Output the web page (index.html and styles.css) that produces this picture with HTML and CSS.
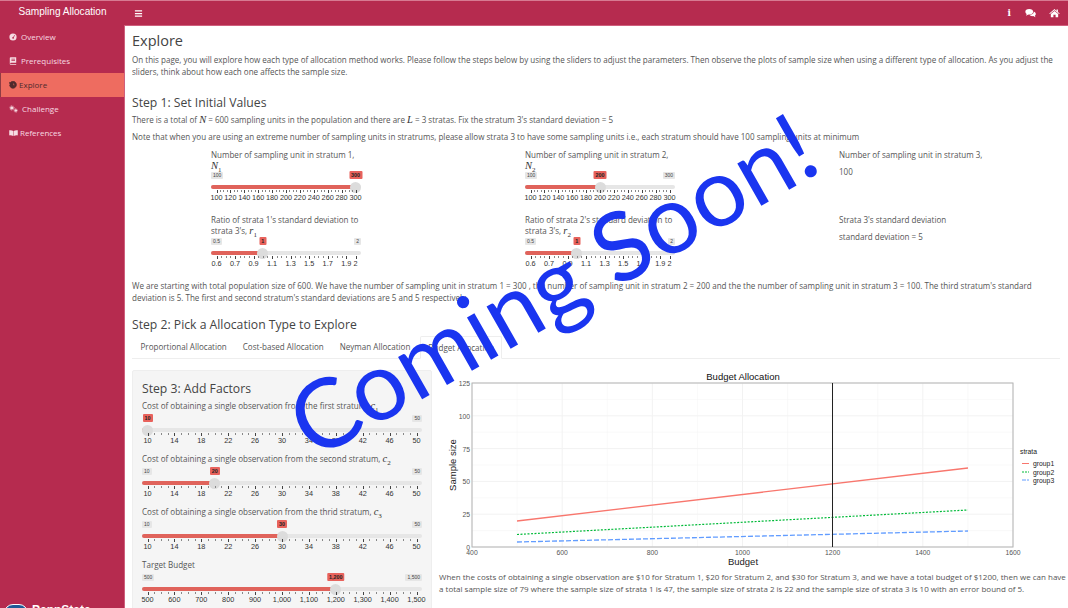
FILE: index.html
```html
<!DOCTYPE html>
<html lang="en">
<head>
    <meta charset="UTF-8">
    <title>Sampling Allocation</title>
    <link rel="stylesheet" href="styles.css">
</head>
<body>

    <header class="topbar">
        <div class="brand">Sampling Allocation</div>
        <div class="topbar-main">
            <svg class="icon burger" viewBox="0 0 10 10"><path d="M1 1.500h8v1.300H1zM1 4.400h8v1.300H1zM1 7.300h8v1.300H1z"/></svg>
            <div class="topbar-right">
                <span class="info">i</span>
                <svg class="icon" viewBox="0 0 12 10"><ellipse cx="4.600" cy="3.600" rx="4.200" ry="3"/><path d="M2 5.500L1.200 8 4.500 6z"/><path d="M9.500 3.400c1.400.5 2.300 1.500 2.300 2.700 0 .8-.4 1.400-1 1.900l.6 1.600-2.400-1.200c-1.600.3-3.400-.2-4.200-1.400 2.600.1 5-1.300 4.700-3.600z"/></svg>
                <svg class="icon" viewBox="0 0 12 10"><path d="M6 .5L.3 5.500l.7.7L6 1.900l5 4.300.7-.7-2-1.700V1.200H8.200v1.500z"/><path d="M2 6.200L6 2.800l4 3.400V9.500H7.200V7H4.800v2.500H2z"/></svg>
            </div>
        </div>
    </header>

    <div class="layout">
        <nav class="sidebar">
            <a class="nav-item">
                <svg class="icon" viewBox="0 0 10 10"><path fill-rule="evenodd" d="M5 .5a4.500 4.500 0 1 1 0 9 4.500 4.500 0 0 1 0-9zM6.800 2.600L5.300 5a1.100 1.100 0 1 0 .7.400L7.500 3z"/></svg>
                Overview
            </a>
            <a class="nav-item">
                <svg class="icon" viewBox="0 0 10 10"><path fill-rule="evenodd" d="M1 1.500C1 .7 1.600.3 2.300.3H9v7H2.300c-.5 0-.8.3-.8.7s.3.7.8.7H9v1H2.300C1.500 9.700 1 9.100 1 8.300zM3 2.200v.8h4.500v-.8zM3 3.800v.8h4.500v-.8z"/></svg>
                Prerequisites
            </a>
            <a class="nav-item active">
                <svg class="icon" viewBox="0 0 10 10" fill="none" stroke="currentColor" stroke-width=".8"><path d="M1.300 2.500A4.300 4.300 0 1 1 .7 5M5 2.600V5.300H7.200"/><path d="M.8 1.200v2h2"/></svg>
                Explore
            </a>
            <a class="nav-item">
                <svg class="icon wide" viewBox="0 0 12 10"><circle cx="3.800" cy="3.500" r="2.300"/><circle cx="3.800" cy="3.500" r="3" fill="none" stroke="currentColor" stroke-width=".9" stroke-dasharray="1 1"/><circle cx="9" cy="7" r="1.800"/><circle cx="9" cy="7" r="2.400" fill="none" stroke="currentColor" stroke-width=".8" stroke-dasharray="1 .9"/></svg>
                Challenge
            </a>
            <a class="nav-item tight">
                <svg class="icon wide" viewBox="0 0 12 10"><path d="M.3 1.300C2.200 1 4.300 1.200 5.700 2.200V9C4.300 8.200 2.200 8 .3 8.200zM11.700 1.300C9.800 1 7.700 1.200 6.300 2.200V9c1.400-.8 3.500-1 5.400-.8z"/></svg>
                References
            </a>
            <div class="footer-logo">
                <span class="shield"></span>
                <span class="footer-name">PennState</span>
            </div>
        </nav>

        <main class="content">
            <h1>Explore</h1>
            <p>On this page, you will explore how each type of allocation method works. Please follow the steps below by using the sliders to adjust the parameters. Then observe the plots of sample size when using a different type of allocation. As you adjust the sliders, think about how each one affects the sample size.</p>

            <h2 class="step1">Step 1: Set Initial Values</h2>
            <p>There is a total of <i class="math">N</i> = 600 sampling units in the population and there are <i class="math">L</i> = 3 stratas. Fix the stratum 3's standard deviation = 5</p>
            <p class="note">Note that when you are using an extreme number of sampling units in stratrums, please allow strata 3 to have some sampling units i.e., each stratum should have 100 sampling units at minimum</p>

            <div class="initial-grid">
                <div class="field">
                    <label>Number of sampling unit in stratum 1,<br><i class="math">N<sub>1</sub></i></label>
                    <div class="slider small" data-slider="n1"></div>
                </div>
                <div class="field">
                    <label>Number of sampling unit in stratum 2,<br><i class="math">N<sub>2</sub></i></label>
                    <div class="slider small" data-slider="n2"></div>
                </div>
                <div class="field">
                    <label class="plain">Number of sampling unit in stratum 3,</label>
                    <div class="static-value">100</div>
                </div>
                <div class="field lower">
                    <label>Ratio of strata 1's standard deviation to<br>strata 3's, <i class="math">r<sub>1</sub></i></label>
                    <div class="slider small" data-slider="r1"></div>
                </div>
                <div class="field lower">
                    <label>Ratio of strata 2's standard deviation to<br>strata 3's, <i class="math">r<sub>2</sub></i></label>
                    <div class="slider small" data-slider="r2"></div>
                </div>
                <div class="field lower">
                    <label class="plain">Strata 3's standard deviation</label>
                    <div class="static-value">standard deviation = 5</div>
                </div>
            </div>

            <p class="summary">We are starting with total population size of 600. We have the number of sampling unit in stratum 1 = 300 , the number of sampling unit in stratum 2 = 200 and the the number of sampling unit in stratum 3 = 100. The third stratum's standard deviation is 5. The first and second stratum's standard deviations are 5 and 5 respectively.</p>

            <h2 class="step2">Step 2: Pick a Allocation Type to Explore</h2>
            <ul class="tabs">
                <li>Proportional Allocation</li>
                <li>Cost-based Allocation</li>
                <li>Neyman Allocation</li>
                <li class="active">Budget Allocation</li>
            </ul>

            <div class="tab-body">
                <section class="well">
                    <h3>Step 3: Add Factors</h3>
                    <label>Cost of obtaining a single observation from the first stratum, <i class="math">c<sub>1</sub></i></label>
                    <div class="slider" data-slider="c1"></div>
                    <label>Cost of obtaining a single observation from the second stratum, <i class="math">c<sub>2</sub></i></label>
                    <div class="slider" data-slider="c2"></div>
                    <label>Cost of obtaining a single observation from the thrid stratum, <i class="math">c<sub>3</sub></i></label>
                    <div class="slider" data-slider="c3"></div>
                    <label>Target Budget</label>
                    <div class="slider" data-slider="budget"></div>
                </section>

                <section class="plot-col">
                    <svg class="plot" width="629" height="202" viewBox="439 368 629 202">
                        <text class="plot-title" x="743" y="381" text-anchor="middle">Budget Allocation</text>
                        <g id="grid"></g>
                        <rect x="472" y="384" width="541" height="164" fill="none" stroke="#b3b3b3"/>
                        <polyline points="517,522 968,469" fill="none" stroke="#f8766d" stroke-width="1.300"/>
                        <polyline points="517,535.500 968,511" fill="none" stroke="#00ba38" stroke-width="1.200" stroke-dasharray="2 1.500"/>
                        <polyline points="517,543 968,532" fill="none" stroke="#619cff" stroke-width="1.300" stroke-dasharray="5 2"/>
                        <line x1="832.500" y1="384" x2="832.500" y2="548" stroke="#222"/>
                        <g id="ticks" class="plot-tick"></g>
                        <text class="plot-axis" x="743" y="566" text-anchor="middle">Budget</text>
                        <text class="plot-axis" x="0" y="0" text-anchor="middle" transform="translate(456 466) rotate(-90)">Sample size</text>
                        <text class="plot-tick dark" x="1020" y="455">strata</text>
                        <line x1="1022" y1="464.500" x2="1029" y2="464.500" stroke="#f8766d"/>
                        <line x1="1022" y1="473" x2="1029" y2="473" stroke="#00ba38" stroke-dasharray="2 1"/>
                        <line x1="1022" y1="481" x2="1029" y2="481" stroke="#619cff" stroke-dasharray="4 1"/>
                        <text class="plot-tick dark" x="1033" y="467">group1</text>
                        <text class="plot-tick dark" x="1033" y="475.500">group2</text>
                        <text class="plot-tick dark" x="1033" y="484">group3</text>
                    </svg>
                    <p class="plot-note">When the costs of obtaining a single observation are $10 for Stratum 1, $20 for Stratum 2, and $30 for Stratum 3, and we have a total budget of $1200, then we can have a total sample size of 79 where the sample size of strata 1 is 47, the sample size of strata 2 is 22 and the sample size of strata 3 is 10 with an error bound of 5.</p>
                </section>
            </div>
        </main>
    </div>

    <div class="coming-soon">Coming Soon!</div>

    <script>
        // every slider: range, current value, label texts and the minor ticks between labels
        var range = function (from, to, step) {
            var out = [];
            for (var v = from; v <= to; v += step) out.push(v);
            return out;
        };
        var ratioLabels = ['0.6', '0.7', '0.9', '1.1', '1.3', '1.5', '1.7', '1.9', '2'];
        var ratioAt = [0.5, 0.7, 0.9, 1.1, 1.3, 1.5, 1.7, 1.9, 2];
        var costs = range(10, 50, 4);
        var budget = range(500, 1500, 100);

        var sliders = {
            n1: { min: 100, max: 300, value: 300, at: range(100, 300, 20), hideMax: true },
            n2: { min: 100, max: 300, value: 200, at: range(100, 300, 20) },
            r1: { min: 0.5, max: 2, value: 1, at: ratioAt, labels: ratioLabels },
            r2: { min: 0.5, max: 2, value: 1, at: ratioAt, labels: ratioLabels },
            c1: { min: 10, max: 50, value: 10, at: costs, hideMin: true },
            c2: { min: 10, max: 50, value: 20, at: costs },
            c3: { min: 10, max: 50, value: 30, at: costs },
            budget: { min: 500, max: 1500, value: 1200, at: budget }
        };

        function money(v) {
            return v >= 1000 ? Math.floor(v / 1000) + ',' + String(v % 1000).padStart(3, '0') : String(v);
        }

        function pct(s, v) {
            return (v - s.min) / (s.max - s.min) * 100;
        }

        document.querySelectorAll('[data-slider]').forEach(function (el) {
            var s = sliders[el.dataset.slider];
            var fmt = s.max >= 1000 ? money : String;
            var p = pct(s, s.value);
            var html = '<div class="tags">';
            if (!s.hideMin) html += '<span class="tag-min">' + fmt(s.min) + '</span>';
            if (!s.hideMax) html += '<span class="tag-max">' + fmt(s.max) + '</span>';
            html += '</div><div class="rail"><div class="scale">';
            html += '<span class="tag-value" style="left:' + p + '%">' + fmt(s.value) + '</span>';
            html += '<span class="fill" style="width:calc(' + p + '% + 5.5px)"></span>';
            html += '<span class="handle" style="left:' + p + '%"></span></div></div>';
            html += '<div class="scale ticks">';
            s.at.forEach(function (v, i) {
                var left = pct(s, v);
                html += '<span class="major" style="left:' + left + '%"></span>';
                html += '<span class="tick-label" style="left:' + left + '%">' + (s.labels ? s.labels[i] : fmt(v)) + '</span>';
                var next = s.at[i + 1];
                if (next !== undefined && next - v > (s.max - s.min) / 12) {
                    for (var k = 1; k < 4; k++) {
                        html += '<span class="minor" style="left:' + pct(s, v + (next - v) * k / 4) + '%"></span>';
                    }
                }
            });
            html += '</div>';
            el.innerHTML = html;
        });

        // plot grid and axis labels
        var grid = '', ticks = '';
        var xAt = function (v) { return 472 + (v - 400) * 541 / 1200; };
        var yAt = function (v) { return 548 - v * 164 / 125; };
        for (var x = 400; x <= 1600; x += 100) {
            grid += '<line x1="' + xAt(x) + '" x2="' + xAt(x) + '" y1="384" y2="548" stroke="#f2f2f2" stroke-width="' + (x % 200 ? .5 : 1) + '"/>';
            if (x % 200 === 0) ticks += '<text x="' + xAt(x) + '" y="556" text-anchor="middle">' + x + '</text>';
        }
        for (var y = 0; y <= 125; y += 12.5) {
            grid += '<line x1="472" x2="1013" y1="' + yAt(y) + '" y2="' + yAt(y) + '" stroke="#f2f2f2" stroke-width="' + (y % 25 ? .5 : 1) + '"/>';
            if (y % 25 === 0) ticks += '<text x="470" y="' + (yAt(y) + 3) + '" text-anchor="end">' + y + '</text>';
        }
        document.getElementById('grid').innerHTML = grid;
        document.getElementById('ticks').innerHTML = ticks;
    </script>

</body>
</html>
```

FILE: styles.css
```css
html, body {
    height: 608px;
    margin: 0;
    overflow: hidden;
}
body {
    position: relative;
    font-family: "Open Sans", sans-serif;
    font-size: 8.05px;
    line-height: 12px;
    color: #555;
    background: #fff;
}
h1, h2, h3, p, ul, label {
    margin: 0;
    padding: 0;
    font-weight: normal;
}
.icon {
    width: 8px;
    height: 8px;
    fill: currentColor;
    flex: none;
}
.icon.wide {
    width: 9px;
}

/* top bar */
.topbar {
    display: flex;
    height: 24px;
    margin-top: 1px;
    color: #fff;
    background: #b62b4f;
    box-shadow: 0 1px 0 #cf5f7d, 0 -1px 0 #d77a92;
}
.brand {
    width: 125px;
    font-family: "Liberation Sans", sans-serif;
    font-size: 10.1px;
    line-height: 22px;
    text-align: center;
}
.topbar-main {
    flex: 1;
    display: flex;
    align-items: center;
    justify-content: space-between;
    padding: 0 8px 0 9px;
}
.burger {
    width: 9px;
    height: 9px;
}
.topbar-right {
    display: flex;
    align-items: center;
    gap: 13px;
}
.topbar-right .icon {
    width: 11px;
    height: 10px;
}
.info {
    font-family: "DejaVu Serif", serif;
    font-size: 9px;
    font-weight: bold;
    margin-right: 1px;
}

/* layout */
.layout {
    display: flex;
    height: 583px;
}
.sidebar {
    width: 124px;
    flex: none;
    color: #f6dbe2;
    background: #b62b4f;
    border-right: 1px solid #cf5f7d;
    overflow: hidden;
}
.nav-item {
    display: flex;
    align-items: center;
    gap: 4px;
    height: 24px;
    padding-left: 9px;
    font-size: 8px;
}
.nav-item.tight {
    gap: 2px;
}
.nav-item.active {
    gap: 2px;
    padding-left: 8px;
    color: #4f2b2d;
    background: #ee6c60;
    border-left: 1px solid #8e3c44;
}
.footer-logo {
    display: flex;
    gap: 4px;
    margin: 459px 0 0 4px;
}
.shield {
    width: 22px;
    height: 24px;
    background: #1e5a96;
    border: 1px solid #fff;
    border-radius: 9px 9px 0 0;
}
.footer-name {
    color: #fff;
    font-family: "Liberation Sans", sans-serif;
    font-size: 12px;
    font-weight: bold;
}

/* main column */
.content {
    flex: 1;
    min-width: 0;
    padding: 7px 8px 0 7px;
}
h1 {
    font-size: 14.5px;
    line-height: 18px;
    color: #444;
    margin-bottom: 4px;
}
h2 {
    font-size: 12.2px;
    line-height: 16px;
    color: #444;
}
.step1 {
    margin: 17px 0 3px;
}
.note {
    margin-top: 5px;
}
.math {
    font-family: "Liberation Serif", serif;
    font-size: 10.5px;
    line-height: 0;
    color: #333;
}
.math sub {
    font-size: 7px;
    font-style: normal;
    line-height: 0;
}

/* step 1 sliders */
.initial-grid {
    display: grid;
    grid-template-columns: repeat(3, 314px);
    grid-template-rows: 65px auto;
    margin: 6px 0 0 79px;
}
.field label {
    display: block;
    width: 160px;
    height: 20px;
    line-height: 11px;
}
.field.lower label {
    height: 21px;
}
.field label.plain,
.field.lower label.plain {
    width: auto;
    height: 12px;
    line-height: 12px;
}
.static-value {
    margin-top: 5px;
}

/* range sliders */
.slider {
    position: relative;
    width: 280px;
    height: 37px;
    margin-bottom: 4px;
}
.slider.small {
    width: 150px;
}
.tags {
    position: relative;
    display: flex;
    justify-content: space-between;
    height: 7px;
    padding-top: 3px;
}
.tags span {
    height: 7px;
    padding: 0 2px;
    font-family: "Liberation Sans", sans-serif;
    font-size: 5px;
    line-height: 7px;
    color: #444;
    background: #e6e6e6;
    border-radius: 1px;
}
.tag-max {
    margin-left: auto;
}
.rail {
    position: relative;
    height: 4px;
    margin-top: 6px;
    background: #e6e6e6;
    border-radius: 2px;
}
.scale {
    position: absolute;
    left: 5.5px;
    right: 5.5px;
    top: 0;
    bottom: 0;
}
.ticks {
    top: 21px;
    height: 16px;
    bottom: auto;
}
.fill {
    position: absolute;
    left: -5.5px;
    top: 0;
    height: 4px;
    background: #e0635b;
    border-radius: 2px 0 0 2px;
}
.handle {
    position: absolute;
    top: -3.5px;
    width: 11px;
    height: 11px;
    margin-left: -5.5px;
    background: #dcdcdc;
    border-radius: 50%;
}
.tag-value {
    position: absolute;
    top: -14px;
    height: 8px;
    padding: 0 2px;
    transform: translateX(-50%);
    font-family: "Liberation Sans", sans-serif;
    font-size: 5.4px;
    font-weight: bold;
    line-height: 8px;
    color: #222;
    background: #e8625c;
    border-radius: 1px;
}
.major, .minor {
    position: absolute;
    top: 0;
    width: 1px;
    background: #444;
}
.major {
    height: 3px;
}
.minor {
    height: 2px;
    background: #888;
}
.tick-label {
    position: absolute;
    top: 3px;
    transform: translateX(-50%);
    font-family: "Liberation Sans", sans-serif;
    font-size: 7.3px;
    line-height: 10px;
    color: #333;
}

.summary {
    margin-top: 4px;
}

/* step 2 tabs */
.step2 {
    margin: 13px 0 3px;
}
.tabs {
    display: flex;
    height: 22px;
    list-style: none;
    border-bottom: 1px solid #eee;
}
.tabs li {
    padding: 0 8px;
    line-height: 22px;
}
.tabs li:first-child {
    padding-left: 8.5px;
}
.tabs li.active {
    margin-left: 2px;
    height: 23px;
    background: #fff;
    border: 1px solid #eee;
    border-bottom-color: #fff;
    border-radius: 2px 2px 0 0;
    box-sizing: border-box;
    line-height: 21px;
    padding: 0 7px;
}

/* step 3 panel */
.tab-body {
    display: flex;
    margin-top: 11px;
}
.well {
    width: 280px;
    flex: none;
    height: 300px;
    padding: 10px 9px;
    background: #f5f5f5;
    border: 1px solid #eee;
    border-radius: 2px;
}
h3 {
    font-size: 12.2px;
    line-height: 16px;
    color: #444;
    margin-bottom: 3px;
}
.well label {
    display: block;
    height: 12px;
    line-height: 12px;
}
.plot-col {
    margin-left: 7px;
    margin-top: -3px;
    width: 632px;
    flex: none;
}
.plot {
    display: block;
}
.plot text {
    font-family: "Liberation Sans", sans-serif;
}
.plot-title {
    font-size: 9.5px;
    fill: #111;
}
.plot-axis {
    font-size: 9.5px;
    fill: #222;
}
.plot-tick {
    font-size: 6.8px;
    fill: #555;
}
.plot-tick.dark {
    fill: #222;
}
.plot-note {
    margin-top: 2px;
    font-size: 8px;
}

/* overlay banner */
.coming-soon {
    position: absolute;
    left: 551px;
    top: 283px;
    transform: translate(-50%, -50%) rotate(-29.7deg);
    font-family: Lato, sans-serif;
    font-size: 96px;
    line-height: 1;
    white-space: nowrap;
    color: #1a35f0;
}
```
